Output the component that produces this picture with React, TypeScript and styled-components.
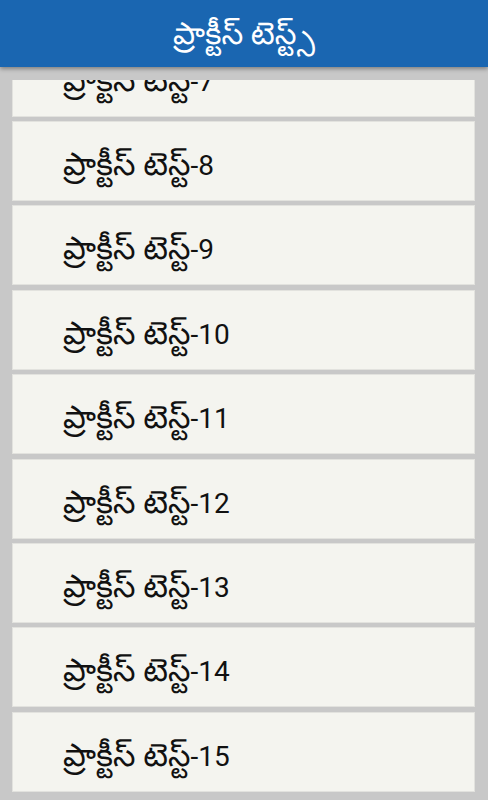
import React, { useLayoutEffect, useRef } from "react";
import styled, { createGlobalStyle } from "styled-components";

const Global = createGlobalStyle`
  html, body { margin: 0; padding: 0; height: 100%; }
  body {
    background: #c8c8c8;
    font-family: Roboto, "Noto Sans Telugu", "Noto Sans", sans-serif;
    overflow: hidden;
  }
  #root { height: 100%; }
`;

const Page = styled.div`
  display: flex;
  flex-direction: column;
  height: 100vh;
  background: #c8c8c8;
`;

const Header = styled.header`
  position: relative;
  z-index: 2;
  height: 67px;
  flex: none;
  display: flex;
  align-items: center;
  justify-content: center;
  background: #1a66b1;
  box-shadow: 0 2px 4px rgba(0, 0, 0, 0.35);
`;

const Title = styled.h1`
  margin: 0;
  color: #ffffff;
  font-size: 31px;
  font-weight: 400;
  line-height: 1;
`;

const Scroller = styled.div`
  flex: 1;
  min-height: 0;
  margin: 13px 13px 0 12px;
  overflow: hidden;
`;

const List = styled.ul`
  list-style: none;
  margin: 0;
  padding: 0 0 8px;
  display: flex;
  flex-direction: column;
  gap: 4.43px;
`;

const Card = styled.li`
  box-sizing: border-box;
  height: 80px;
  flex: none;
  display: flex;
  align-items: center;
  padding: 6px 0 0 50px;
  background: #f4f4ef;
  border: 1px solid #e2e2de;
  color: #111111;
  font-size: 28px;
  line-height: 1;
`;

const Word = styled.span`
  font-size: 32px;
`;

const tests = Array.from({ length: 15 }, (_, i) => i + 1);

export default function App() {
  const scroller = useRef<HTMLDivElement>(null);

  useLayoutEffect(() => {
    if (scroller.current) {
      scroller.current.scrollTop = scroller.current.scrollHeight;
    }
  }, []);

  return (
    <Page>
      <Global />
      <Header>
        <Title>ప్రాక్టీస్ టెస్ట్స్</Title>
      </Header>
      <Scroller ref={scroller}>
        <List>
          {tests.map((n) => (
            <Card key={n}>
              <span>
                <Word>ప్రాక్టీస్ టెస్ట్</Word>-{n}
              </span>
            </Card>
          ))}
        </List>
      </Scroller>
    </Page>
  );
}
